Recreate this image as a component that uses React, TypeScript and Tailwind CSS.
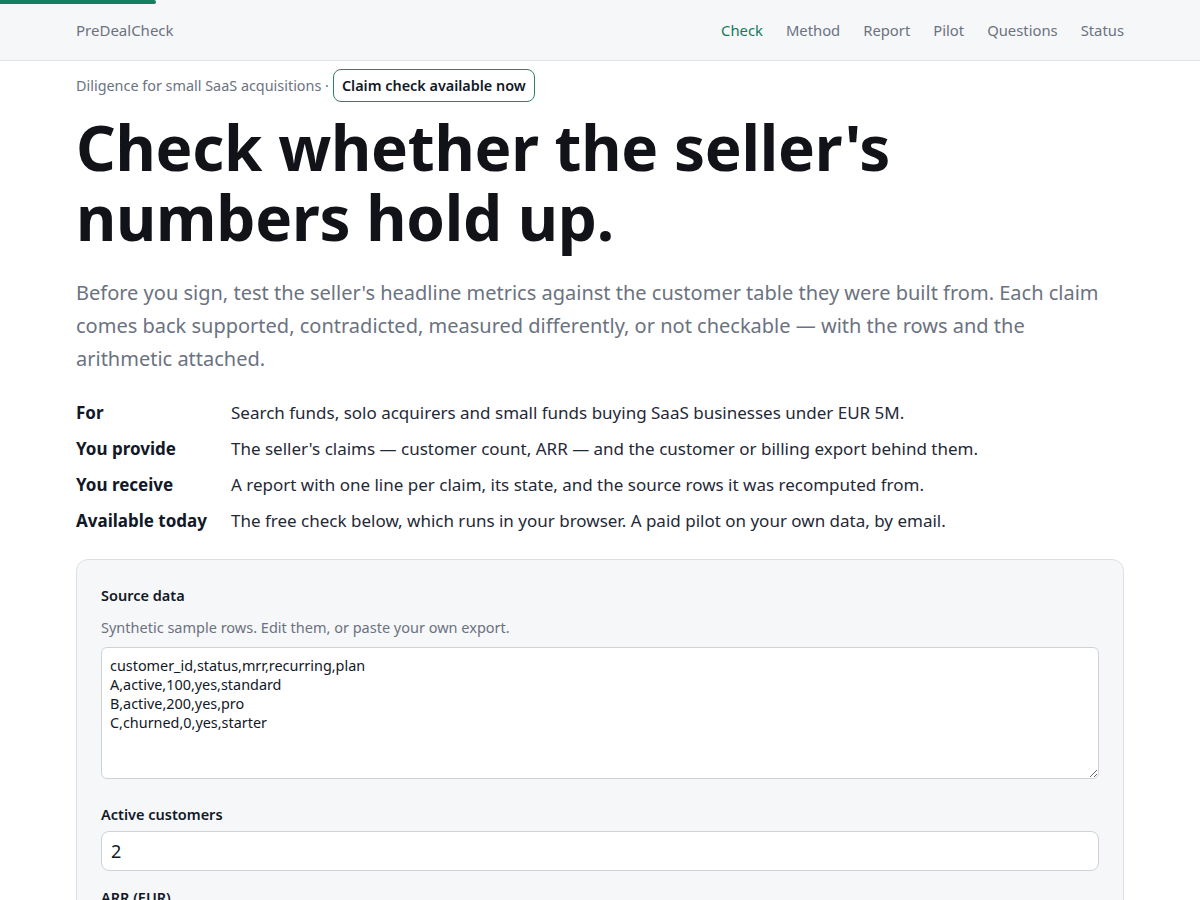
import React, { useState } from 'react';

const navItems = ['Check', 'Method', 'Report', 'Pilot', 'Questions', 'Status'];

const facts = [
  { label: 'For', text: 'Search funds, solo acquirers and small funds buying SaaS businesses under EUR 5M.' },
  { label: 'You provide', text: "The seller's claims — customer count, ARR — and the customer or billing export behind them." },
  { label: 'You receive', text: 'A report with one line per claim, its state, and the source rows it was recomputed from.' },
  { label: 'Available today', text: 'The free check below, which runs in your browser. A paid pilot on your own data, by email.' },
];

const sampleRows = `customer_id,status,mrr,recurring,plan
A,active,100,yes,standard
B,active,200,yes,pro
C,churned,0,yes,starter`;

const App: React.FC = () => {
  const [rows, setRows] = useState(sampleRows);
  const [customers, setCustomers] = useState('2');
  const [arr, setArr] = useState('3600');

  return (
    <div className="min-h-screen bg-white text-[#111827]" style={{ fontFamily: '"Noto Sans", "Open Sans", sans-serif' }}>
      <header className="relative h-[61px] border-b border-[#dfe2e6] bg-[#f6f7f9]">
        <div className="absolute left-0 top-0 h-[4px] w-[156px] rounded-r-full bg-[#13805f]" />
        <div className="mx-auto flex h-full max-w-[1048px] items-center justify-between">
          <span className="text-[15px] text-[#6b7280]">PreDealCheck</span>
          <nav className="flex items-center gap-[23px] text-[14.8px]">
            {navItems.map((item) => (
              <a
                key={item}
                href={`#${item.toLowerCase()}`}
                className={item === 'Check' ? 'text-[#16795b]' : 'text-[#6b7280]'}
              >
                {item}
              </a>
            ))}
          </nav>
        </div>
      </header>

      <main className="mx-auto max-w-[1048px] pt-2">
        <div className="flex items-center gap-1 text-[14.4px] text-[#6b7280]">
          <span>Diligence for small SaaS acquisitions ·</span>
          <span className="rounded-lg border border-[#2f8068] bg-white px-2 py-[5px] text-[14.4px] font-semibold leading-[21px] text-[#111827]">
            Claim check available now
          </span>
        </div>

        <h1 className="mt-[10px] text-[62px] font-bold leading-[70px] tracking-[-0.25px] text-[#111319]">
          Check whether the seller's
          <br />
          numbers hold up.
        </h1>

        <p className="mt-[24px] text-[20px] leading-[33px] text-[#6b7280]">
          Before you sign, test the seller's headline metrics against the customer table they were built from. Each claim
          comes back supported, contradicted, measured differently, or not checkable — with the rows and the arithmetic
          attached.
        </p>

        <dl className="mt-[25px] grid grid-cols-[155px_1fr] gap-y-[10px] text-[17px] leading-[26px]">
          {facts.map((f) => (
            <React.Fragment key={f.label}>
              <dt className="font-bold text-[#111827]">{f.label}</dt>
              <dd className="text-[#1f2937]">{f.text}</dd>
            </React.Fragment>
          ))}
        </dl>

        <section className="mt-[25px] rounded-xl border border-[#dcdfe3] bg-[#f6f7f9] px-[24px] pb-8 pt-[25px]">
          <label className="block text-[14.5px] font-semibold leading-[20px] text-[#111827]">Source data</label>
          <p className="mt-[12px] text-[14.5px] leading-[20px] text-[#6b7280]">
            Synthetic sample rows. Edit them, or paste your own export.
          </p>
          <textarea
            value={rows}
            onChange={(e) => setRows(e.target.value)}
            className="mt-[10px] block h-[132px] w-full resize-y rounded-md border border-[#cfd3d8] bg-white px-[8px] py-[8px] text-[14.4px] leading-[19px] text-[#111827] outline-none"
          />

          <label className="mt-[25px] block text-[14.5px] font-semibold leading-[20px] text-[#111827]">Active customers</label>
          <input
            value={customers}
            onChange={(e) => setCustomers(e.target.value)}
            className="mt-[7px] block h-[40px] w-full rounded-lg border border-[#cfd3d8] bg-white px-[9px] text-[18px] text-[#111827] outline-none"
          />

          <label className="mt-[16px] block text-[14.5px] font-semibold leading-[20px] text-[#111827]">ARR (EUR)</label>
          <input
            value={arr}
            onChange={(e) => setArr(e.target.value)}
            className="mt-[7px] block h-[40px] w-full rounded-lg border border-[#cfd3d8] bg-white px-[9px] text-[18px] text-[#111827] outline-none"
          />
        </section>
      </main>
    </div>
  );
};

export default App;
